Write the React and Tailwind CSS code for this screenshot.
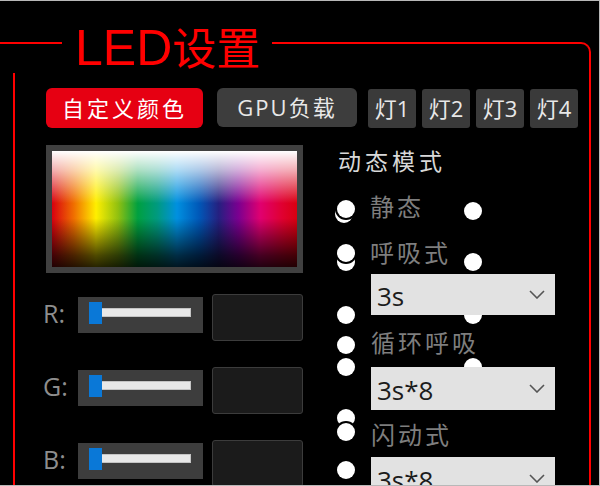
import React from 'react';

const CJK = '"Open Sans", "Noto Sans CJK SC", sans-serif';

const leftDots = [
  { x: 335, y: 204, ring: false },
  { x: 337, y: 199, ring: true },
  { x: 337, y: 252, ring: false },
  { x: 337, y: 243, ring: true },
  { x: 337, y: 305, ring: false },
  { x: 337, y: 335, ring: false },
  { x: 337, y: 357, ring: false },
  { x: 337, y: 408, ring: false },
  { x: 337, y: 422, ring: true },
  { x: 337, y: 460, ring: false },
];

const rightDots = [201, 252, 305, 357];

function Dot({ x, y, ring }) {
  return (
    <div
      className={`absolute w-[18px] h-[18px] rounded-full bg-white ${ring ? 'shadow-[0_0_0_2px_#000]' : ''}`}
      style={{ left: x, top: y }}
    />
  );
}

function Slider({ label }) {
  return (
    <div className="flex items-start h-[47px]">
      <div className="w-[35px] -ml-[3px] mt-[7px] text-[25px] leading-[25px] text-[#8e8e8e]">{label}</div>
      <div className="relative mt-[3px] w-[125px] h-[36px] bg-[#3d3d3d] pt-[11px] px-[12px]">
        <div className="h-[9px] bg-[#e8e8e8] border border-[#c4c4c4]" />
        <div className="absolute left-[11px] top-[5px] w-[13px] h-[22px] bg-[#0a78d7]" />
      </div>
      <div className="ml-[9px] w-[91px] h-[47px] bg-[#1b1b1b] border border-[#3c3c3c] rounded-[3px]" />
    </div>
  );
}

function Select({ value, h, mt }) {
  return (
    <div className={`relative z-10 ml-[33px] w-[184px] ${h} ${mt} bg-[#e2e2e2] flex items-center pl-[6px] pr-[10px]`}>
      <span className="text-[26px] leading-none text-[#1c1c1c] pt-[3px]">{value}</span>
      <svg className="ml-auto" width="16" height="9" viewBox="0 0 16 9">
        <polyline points="1,1 8,8 15,1" fill="none" stroke="#555" strokeWidth="1.6" />
      </svg>
    </div>
  );
}

export default function App() {
  return (
    <div
      className="relative w-[600px] h-[486px] bg-black border-t border-r border-b border-[#b8b8b8] flex flex-col overflow-hidden"
      style={{ fontFamily: CJK }}
    >
      {/* title bar */}
      <div className="flex items-start h-[72px] shrink-0">
        <div className="mt-[41px] w-[62px] h-[2px] bg-[#ff0000]" />
        <div className="ml-[13px] mt-[20px] w-[197px] whitespace-nowrap text-[#ff0000] leading-[50px]">
          <span className="text-[50px]" style={{ fontFamily: '"Liberation Sans", sans-serif' }}>LED</span>
          <span className="text-[44px]" style={{ fontFamily: '"Noto Sans CJK SC", sans-serif' }}>设置</span>
        </div>
        <div className="flex-1 self-stretch mt-[41px] mr-[8px] border-t-2 border-r-2 border-[#ff0000] rounded-tr-[10px]" />
      </div>

      {/* framed body */}
      <div className="flex-1 min-h-0 ml-[13px] mr-[8px] border-l-2 border-r-2 border-[#ff0000] pt-[15px] pl-[31px]">
        <div className="flex items-start">
          <div className="w-[157px] h-[40px] rounded-[6px] bg-[#e60012] text-white text-[22px] tracking-[3px] flex items-center justify-center">
            自定义颜色
          </div>
          <div className="ml-[14px] w-[140px] h-[39px] rounded-[6px] bg-[#3d3d3d] text-[#e8e8e8] text-[22px] tracking-[2px] flex items-center justify-center">
            GPU负载
          </div>
          <div className="ml-[11px] mt-[1px] flex gap-[6px]">
            {['灯1', '灯2', '灯3', '灯4'].map((t) => (
              <div key={t} className="w-[48px] h-[39px] rounded-[3px] bg-[#3a3a3a] text-[#e8e8e8] text-[22px] flex items-center justify-center">
                {t}
              </div>
            ))}
          </div>
        </div>

        <div className="mt-[17px] flex items-start">
          <div className="w-[257px] flex flex-col">
            <div className="h-[128px] p-[6px] bg-[#404040]">
              <div className="h-full bg-[linear-gradient(to_right,#d80010,#f07000_9%,#ffef00_18%,#90c010_27%,#00a040_35%,#009a80_43%,#0090e0_51%,#0058b8_60%,#252080_68%,#7a0090_76%,#e00070_85%,#e00030_94%,#d80010)]">
                <div className="h-full bg-[linear-gradient(to_bottom,#ffffff,#ffffffb0_16%,#ffffff00_45%,#00000000_58%,#000000b0_90%,#000000d8)]" />
              </div>
            </div>
            <div className="mt-[21px] flex flex-col gap-[26px]">
              <Slider label="R:" />
              <Slider label="G:" />
              <Slider label="B:" />
            </div>
          </div>

          <div className="ml-[35px] w-[217px] flex flex-col">
            <div className="mt-[5px] text-[23px] leading-[23px] tracking-[4px] text-[#d8d8d8]">动态模式</div>
            <div className="mt-[22px] pl-[32px] text-[24px] leading-[24px] tracking-[3px] text-[#7e7e7e]">静态</div>
            <div className="mt-[22px] pl-[32px] text-[24px] leading-[24px] tracking-[3px] text-[#7e7e7e]">呼吸式</div>
            <Select value="3s" h="h-[41px]" mt="mt-[9px]" />
            <div className="mt-[16px] pl-[33px] text-[24px] leading-[24px] tracking-[3px] text-[#7e7e7e]">循环呼吸</div>
            <Select value="3s*8" h="h-[43px]" mt="mt-[12px]" />
            <div className="mt-[13px] pl-[33px] text-[24px] leading-[24px] tracking-[3px] text-[#7e7e7e]">闪动式</div>
            <Select value="3s*8" h="h-[43px]" mt="mt-[10px]" />
          </div>
        </div>
      </div>

      {rightDots.map((y) => (
        <Dot key={y} x={464} y={y} />
      ))}
      {leftDots.map((d, i) => (
        <Dot key={i} {...d} />
      ))}
    </div>
  );
}
